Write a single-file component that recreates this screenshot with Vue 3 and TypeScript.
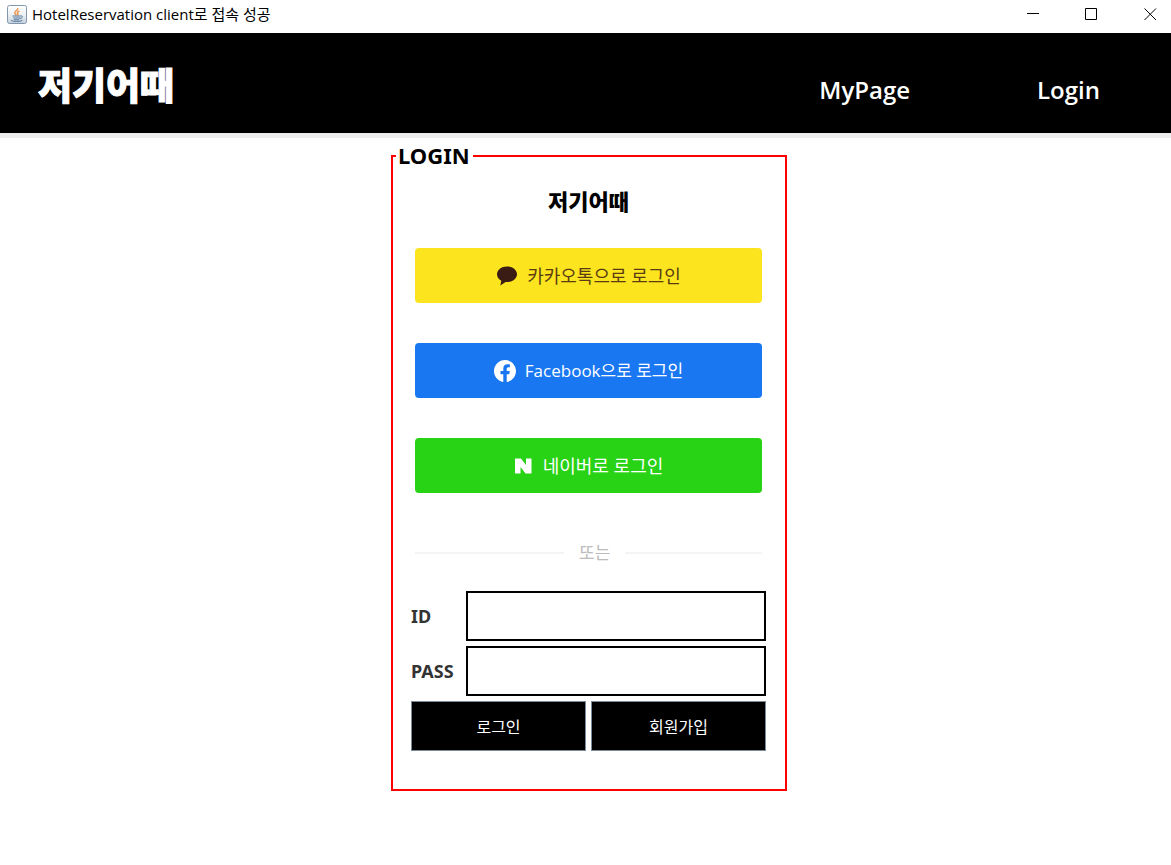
<script setup lang="ts">
import { ref } from 'vue'

const userId = ref<string>('')
const password = ref<string>('')
</script>

<template>
  <div class="window">
    <div class="titlebar">
      <svg class="app-icon" viewBox="0 0 20 20" aria-hidden="true">
        <defs>
          <linearGradient id="tile" x1="0" y1="0" x2="0" y2="1">
            <stop offset="0" stop-color="#fff" />
            <stop offset="0.5" stop-color="#edf1f5" />
            <stop offset="1" stop-color="#c3d0dd" />
          </linearGradient>
        </defs>
        <rect x="0.5" y="0.5" width="19" height="18" rx="2" fill="url(#tile)" stroke="#8297ac" />
        <path d="M10.8 3C11.5 5 7.2 6 7.8 8.1c.2 1 1.3 1.3 1.5 2.2M12.4 6c-2 .8-2.7 1.7-1.6 2.8.5.6.1 1.1-.4 1.5" fill="none" stroke="#ee9145" stroke-width="1.4" />
        <path d="M5.5 11h8M6.3 13h6.8M7 14.8h5.4M13.5 11c2.8-.7 2.3 2.3-.5 2.5M4.2 15.4c1.8 1.4 9.2 1.4 11.2 0" fill="none" stroke="#55799c" stroke-width="1" />
      </svg>
      <span class="title">HotelReservation client로 접속 성공</span>
      <div class="window-controls">
        <button type="button" aria-label="Minimize">
          <svg viewBox="0 0 13 13"><path d="M1 5.5h12" /></svg>
        </button>
        <button type="button" aria-label="Maximize">
          <svg viewBox="0 0 13 13"><path d="M.5.5h11v11H.5z" /></svg>
        </button>
        <button type="button" aria-label="Close">
          <svg viewBox="0 0 13 13"><path d="M.5.5l11.5 11.5M12 .5L.5 12" /></svg>
        </button>
      </div>
    </div>

    <header class="banner">
      <a class="brand" href="#">저기어때</a>
      <nav>
        <a href="#">MyPage</a>
        <a href="#">Login</a>
      </nav>
    </header>

    <main>
      <form @submit.prevent>
        <fieldset>
          <legend>LOGIN</legend>
          <div class="small-brand">저기어때</div>

          <div class="social">
            <button type="button" class="kakao">
              <svg width="22" height="20" viewBox="0 0 22 20" aria-hidden="true">
                <path d="M11 .5C5.300.5 1 4 1 8.300c0 2.800 1.700 5.100 4.300 6.400L4.300 19.500l5.300-3.600c.5.100.900.100 1.400.100 5.700 0 10-3.400 10-7.700S16.700.5 11 .5z" fill="#3b1c14" />
              </svg>
              <span>카카오톡으로 로그인</span>
            </button>
            <button type="button" class="facebook">
              <svg width="22" height="22" viewBox="0 0 24 24" aria-hidden="true">
                <path d="M24 12.073C24 5.405 18.627 0 12 0S0 5.405 0 12.073C0 18.100 4.388 23.094 10.125 24v-8.437H7.078v-3.490h3.047V9.413c0-3.026 1.792-4.697 4.533-4.697 1.312 0 2.686.236 2.686.236v2.971h-1.514c-1.491 0-1.955.930-1.955 1.886v2.264h3.328l-.532 3.490h-2.796V24C19.612 23.094 24 18.100 24 12.073z" fill="#fff" />
              </svg>
              <span>Facebook으로 로그인</span>
            </button>
            <button type="button" class="naver">
              <svg width="20" height="16" viewBox="0 0 20 16" aria-hidden="true">
                <path d="M1 .5h6l5 6.500V.5h5.500v15h-6l-5-6.500v6.500H1z" fill="#fff" />
              </svg>
              <span>네이버로 로그인</span>
            </button>
          </div>

          <div class="divider"><span>또는</span></div>

          <div class="credentials">
            <label for="user-id">ID</label>
            <input id="user-id" v-model="userId" type="text" />
            <label for="user-pass">PASS</label>
            <input id="user-pass" v-model="password" type="password" />
          </div>
          <div class="actions">
            <button type="submit">로그인</button>
            <button type="button">회원가입</button>
          </div>
        </fieldset>
      </form>
    </main>
  </div>
</template>

<style>
body {
  margin: 0;
  background: #fff;
}
</style>

<style scoped>
.window {
  min-height: 100vh;
  background: #fff;
  color: #000;
  font-family: "Open Sans", "Noto Sans CJK KR", sans-serif;
}

.window *,
.window {
  box-sizing: border-box;
}

button {
  margin: 0;
  padding: 0;
  border: 0;
  font-family: inherit;
  cursor: pointer;
}

a {
  color: inherit;
  text-decoration: none;
}

.titlebar {
  display: flex;
  align-items: center;
  height: 33px;
  padding: 0 14px 4px 7px;
}

.app-icon {
  width: 20px;
  height: 20px;
  margin-right: 5px;
}

.title {
  padding-bottom: 2px;
  font-size: 15px;
  line-height: 24px;
  white-space: nowrap;
}

.window-controls {
  display: flex;
  gap: 46px;
  margin-left: auto;
}

.window-controls button {
  width: 13px;
  height: 13px;
  background: none;
}

.window-controls svg {
  display: block;
  width: 13px;
  height: 13px;
  fill: none;
  stroke: #000;
}

.banner {
  display: flex;
  align-items: center;
  justify-content: space-between;
  height: 105px;
  padding: 0 71px 0 38px;
  border-bottom: 5px solid #eee;
  background: #000;
  color: #fff;
}

.brand {
  padding-top: 6px;
  font-size: 37px;
  font-weight: 900;
  line-height: 48px;
  -webkit-text-stroke: 1px #fff;
}

nav {
  display: flex;
  gap: 127px;
  padding-top: 14px;
  font-size: 24px;
  font-weight: 600;
  line-height: 32px;
}

main {
  display: flex;
  justify-content: center;
  padding: 5px 0 24px 7px;
}

form {
  width: 396px;
}

fieldset {
  min-width: 0;
  margin: 0;
  padding: 0 19px 38px 18px;
  border: 2px solid #f00;
}

legend {
  margin-left: -15px;
  padding: 0 3px 2px 2px;
  font-family: "Noto Sans", sans-serif;
  font-size: 22px;
  font-weight: 700;
  line-height: 24px;
}

.small-brand {
  padding: 16px 0 31px;
  font-size: 22px;
  font-weight: 900;
  line-height: 32px;
  text-align: center;
}

.social {
  display: grid;
  gap: 40px;
  padding: 0 4px;
}

.social button {
  display: flex;
  align-items: center;
  justify-content: center;
  gap: 9px;
  height: 55px;
  border-radius: 4px;
  font-size: 18px;
  line-height: 24px;
}

.kakao {
  background: #fce51e;
  color: #5a3c14;
}

.social .facebook {
  background: #1977f2;
  color: #fff;
  font-size: 17px;
}

.naver {
  background: #28d214;
  color: #fff;
}

.divider {
  display: flex;
  align-items: center;
  gap: 15px;
  padding: 48px 4px 26px;
  color: #bbb;
  font-size: 17px;
  line-height: 24px;
}

.divider::before,
.divider::after {
  content: "";
  flex: 12;
  height: 2px;
  background: #f4f4f4;
}

.divider::after {
  flex: 11;
}

.credentials {
  display: grid;
  grid-template-columns: 55px 1fr;
  gap: 5px 0;
  align-items: center;
}

.credentials label {
  color: #333;
  font-family: "Noto Sans", sans-serif;
  font-size: 18px;
  font-weight: 700;
  line-height: 24px;
}

.credentials input {
  width: 100%;
  height: 50px;
  padding: 0 8px;
  border: 2px solid #000;
  border-radius: 0;
  background: #fff;
  font-size: 16px;
}

.actions {
  display: grid;
  grid-template-columns: 1fr 1fr;
  gap: 5px;
  padding-top: 5px;
}

.actions button {
  height: 50px;
  border: 1px solid #7a8a99;
  background: #000;
  color: #fff;
  font-size: 16px;
}
</style>
